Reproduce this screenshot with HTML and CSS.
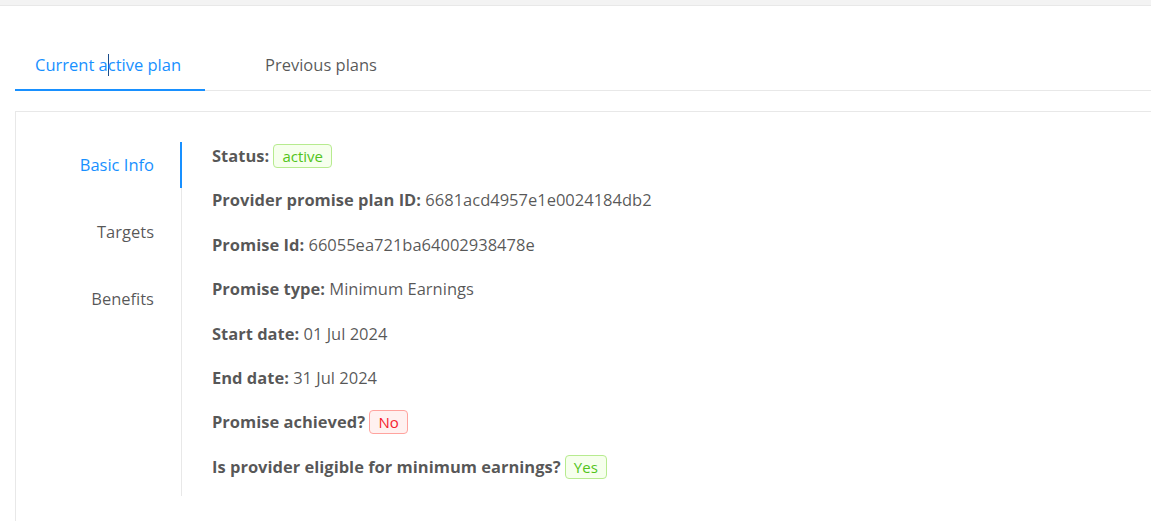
FILE: index.html
```html
<!DOCTYPE html>
<html lang="en">
<head>
    <meta charset="UTF-8">
    <title>Promise plan</title>
    <link rel="stylesheet" href="styles.css">
</head>
<body>
    <div class="topbar"></div>

    <div class="page">
        <div class="tabs">
            <div class="tab active">Current a<span class="caret"></span>ctive plan</div>
            <div class="tab">Previous plans</div>
        </div>

        <div class="card">
            <div class="side-nav">
                <div class="side-item active">Basic Info</div>
                <div class="side-item">Targets</div>
                <div class="side-item">Benefits</div>
            </div>

            <div class="details">
                <div class="row"><b>Status:</b> <span class="tag green">active</span></div>
                <div class="row"><b>Provider promise plan ID:</b> 6681acd4957e1e0024184db2</div>
                <div class="row"><b>Promise Id:</b> 66055ea721ba64002938478e</div>
                <div class="row"><b>Promise type:</b> Minimum Earnings</div>
                <div class="row"><b>Start date:</b> 01 Jul 2024</div>
                <div class="row"><b>End date:</b> 31 Jul 2024</div>
                <div class="row"><b>Promise achieved?</b> <span class="tag red">No</span></div>
                <div class="row"><b>Is provider eligible for minimum earnings?</b> <span class="tag green">Yes</span></div>
            </div>
        </div>
    </div>
</body>
</html>
```

FILE: styles.css
```css
body {
    margin: 0;
    font-family: "Open Sans", "Noto Sans", sans-serif;
    font-size: 16.5px;
    color: rgba(0, 0, 0, 0.67);
    background: #fff;
}
.topbar {
    height: 5px;
    background: #f3f3f3;
    border-bottom: 1px solid #e8e8e8;
}
.page {
    padding: 35px 0 0 15px;
}

/* top tabs */
.tabs {
    display: flex;
    gap: 40px;
    border-bottom: 1px solid #e8e8e8;
}
.tab {
    padding: 12px 20px;
    line-height: 24px;
    margin-bottom: -1px;
    border-bottom: 2px solid transparent;
}
.tab.active {
    padding-right: 24px;
    color: #1890ff;
    border-bottom-color: #1890ff;
}
.caret {
    display: inline-block;
    width: 1px;
    height: 22px;
    margin: 0 -1px 0 0;
    vertical-align: -5px;
    background: #1a4d8c;
}

/* card */
.card {
    display: flex;
    margin-top: 20px;
    padding: 30px 0 40px;
    border: 1px solid #e8e8e8;
    border-right: none;
}
.side-nav {
    width: 165px;
    border-right: 1px solid #e8e8e8;
    text-align: right;
}
.side-item {
    padding: 11px 26px 11px 0;
    line-height: 24px;
    margin-bottom: 21px;
    margin-right: -1px;
    border-right: 2px solid transparent;
}
.side-item.active {
    color: #1890ff;
    border-right-color: #1890ff;
}
.details {
    padding: 2px 0 0 30px;
}
.row {
    line-height: 24px;
    margin-bottom: 20.4px;
}
.row:last-child {
    margin-bottom: 17px;
}
.row b {
    font-weight: 700;
}
.tag {
    display: inline-block;
    padding: 0 8px;
    font-size: 15px;
    line-height: 22px;
    border: 1px solid;
    border-radius: 4px;
}
.tag.green {
    color: #52c41a;
    background: #f6ffed;
    border-color: #b7eb8f;
}
.tag.red {
    color: #f5222d;
    background: #fff1f0;
    border-color: #ffa39e;
}
```
